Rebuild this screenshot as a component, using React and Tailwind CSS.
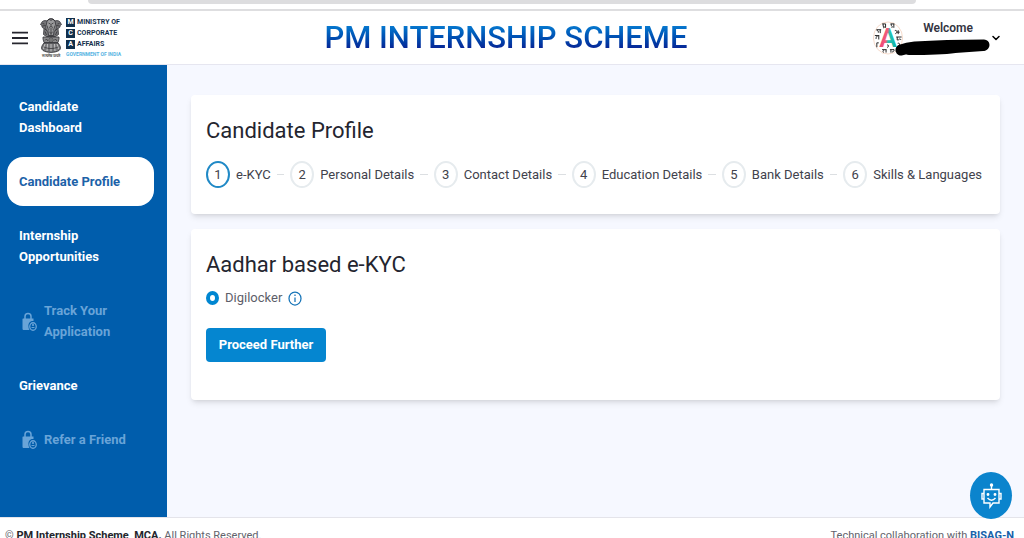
import React, { useState } from "react";
import { FiChevronDown, FiMenu } from "react-icons/fi";

const menus = [
  { label: "Candidate Dashboard" },
  { label: "Candidate Profile" },
  { label: "Internship Opportunities" },
  { label: "Track Your Application", locked: true },
  { label: "Grievance" },
  { label: "Refer a Friend", locked: true },
];

const steps = [
  "e-KYC",
  "Personal Details",
  "Contact Details",
  "Education Details",
  "Bank Details",
  "Skills & Languages",
];

const Emblem = () => (
  <svg viewBox="0 0 44 72" className="h-9 w-[22px]" aria-hidden="true">
    {/* lions */}
    <g fill="#77777a" stroke="#2f2f33" strokeWidth="1.6">
      <path d="M14 8c-5-2-10 0-11 4l-2 3 3 2c-1 4 2 5 4 6l-1 12 6 4h18l6-4-1-12c2-1 5-2 4-6l3-2-2-3c-1-4-6-6-11-4-4-6-12-6-16 0z" />
      <path d="M13 14c0-14 18-14 18 0 3 6 1 13-3 15l-1 8H17l-1-8c-4-2-6-9-3-15z" fill="#9a9a9c" />
    </g>
    <g fill="none" stroke="#29292d" strokeWidth="1.4">
      <path d="M17 12l4 2M27 12l-4 2M22 14v5M18 21l4-2 4 2M19 24h6M14 17l3 10M30 17l-3 10M18 29l4 4 4-4M22 26v10" />
      <path d="M5 13l4 1M39 13l-4 1M5 18l6-1M39 18l-6-1M9 23l4 4M35 23l-4 4M10 29l3 7M34 29l-3 7M15 7l3-3 4 3 4-3 3 3" />
    </g>
    {/* abacus and bell */}
    <path d="M6 40h32v4l-2 7H8l-2-7z" fill="#8a8a8c" stroke="#2f2f33" strokeWidth="1.6" />
    <circle cx="22" cy="46" r="4" fill="#ddd" stroke="#2a2a2d" strokeWidth="1.4" />
    <path d="M19 46h6M22 43v6M10 47l3-3 3 4M28 47l3-3 3 4" fill="none" stroke="#222" strokeWidth="1.3" />
    <path d="M8 52h28c5 6 7 11 2 15-8 5-24 5-32 0-5-4-3-9 2-15z" fill="#77777a" stroke="#2b2b2e" strokeWidth="1.6" />
    <path d="M10 54l-3 10M15 54l-1 14M22 54v15M29 54l1 14M34 54l3 10" stroke="#d5d5d5" strokeWidth="1.6" />
    <path d="M8 60c8 4 20 4 28 0" fill="none" stroke="#2b2b2e" strokeWidth="1.4" />
  </svg>
);

const Avatar = () => (
  <svg viewBox="0 0 64 70" className="h-[34px] w-8 shrink-0" aria-hidden="true">
    <defs>
      <linearGradient id="letter" x1="0" x2="1" y1="0" y2="0.3">
        <stop offset="0.2" stopColor="#ef3f78" />
        <stop offset="0.5" stopColor="#f0607c" />
        <stop offset="0.62" stopColor="#25c4b4" />
        <stop offset="1" stopColor="#12b5a8" />
      </linearGradient>
    </defs>
    <ellipse cx="32" cy="35" rx="30" ry="33" fill="#fff" stroke="#f2cdb8" strokeWidth="1.5" />
    <text x="32" y="54" textAnchor="middle" fontSize="54" fontWeight="600" fill="url(#letter)">
      A
    </text>
    <g fill="none" stroke="#222" strokeWidth="2">
      <path d="M20 6h7M22 6v5c4 0 4 3 0 3M27 6v8" />
      <path d="M37 6h8M39 6c-3 4 4 4 1 8M44 6v8" />
      <path d="M8 18h10M10 18c-2 4 5 2 2 6M16 18v7" />
      <path d="M46 20c5-3 6 6 1 6M53 19v8M50 23h6" />
      <path d="M5 30h9M7 30c6 3-2 3 1 7M13 30v8" />
      <path d="M49 33h11M51 33v6c5 1 4-5 8 0" />
      <path d="M9 45v9M9 45h4" />
      <path d="M52 46c5-2 5 5 1 6h5" />
      <path d="M20 59h9M21 59c5 3-2 3 2 6M28 59v6" />
      <path d="M36 59h9M38 59v6M43 59c4 2 0 4-3 5" />
      <path d="M30 50c4-3 4 5 0 4" />
    </g>
  </svg>
);

const LockIcon = () => (
  <svg viewBox="0 0 30 38" className="h-[19px] w-[15px] shrink-0" aria-hidden="true">
    <path d="M6 14V9c0-8 12-8 12 0v5" fill="none" stroke="currentColor" strokeWidth="3" />
    <path d="M2 13h21v5c-7-1-11 5-10 11 0 3 1 5 2 7H4c-2 0-3-1-3-3V14z" fill="currentColor" />
    <ellipse cx="22" cy="29" rx="6.500" ry="7.500" fill="none" stroke="currentColor" strokeWidth="2.6" />
    <circle cx="22" cy="26" r="2.200" fill="currentColor" />
    <path d="M18 32c1-3 7-3 8 0z" fill="currentColor" />
  </svg>
);

const Header = ({ onMenu }) => (
  <header className="grid h-[56px] shrink-0 grid-cols-[1fr_auto_1fr] items-center border-t-2 border-b border-t-[#dedee0] border-b-[#e6e6f0] bg-white pr-6 pl-3">
    <div className="flex items-center gap-3">
      <button type="button" aria-label="Menu" onClick={onMenu} className="text-[#26262e]">
        <FiMenu className="size-4" viewBox="3 4 18 16" strokeWidth="2" />
      </button>
      <a href="#home" className="flex items-center gap-1">
        <span className="flex w-[22px] flex-col items-center">
          <Emblem />
          <span className="text-[4px] leading-[5px] font-bold whitespace-nowrap text-[#444]">सत्यमेव जयते</span>
        </span>
        <span className="flex flex-col gap-[2px] text-[7px] leading-[9px] font-bold text-[#17324d]">
          {["MINISTRY OF", "CORPORATE", "AFFAIRS"].map((word, index) => (
            <span key={word} className="flex items-center gap-[2px]">
              <span className="w-[9px] bg-[#12304c] text-center text-white">{"MCA"[index]}</span>
              {word}
            </span>
          ))}
          <span className="text-[5px] leading-[6px] text-[#56b4e2]">GOVERNMENT OF INDIA</span>
        </span>
      </a>
    </div>
    <h1 className="bg-linear-to-b from-[#0878cf] from-20% to-[#0a1c92] to-80% bg-clip-text text-[31px] leading-[40px] font-medium text-transparent">
      PM INTERNSHIP SCHEME
    </h1>
    <button type="button" className="relative flex items-center gap-[19px] justify-self-end">
      <Avatar />
      <span className="flex items-center gap-[19px]">
        <span className="pb-5 text-[12px] leading-[16px] font-semibold text-[#33343f]">Welcome</span>
        <FiChevronDown className="size-2" viewBox="4 5 16 14" strokeWidth="3" />
      </span>
      <svg viewBox="0 0 96 18" className="absolute top-[19px] left-[23px] h-[18px] w-24" aria-hidden="true">
        <path d="M6 11Q12 9 20 8Q50 6 89 6" fill="none" stroke="#000" strokeWidth="11" strokeLinecap="round" />
        <path d="M14 12Q45 12 60 10L88 8" fill="none" stroke="#000" strokeWidth="8" strokeLinecap="round" />
      </svg>
    </button>
  </header>
);

const Sidebar = ({ active, onSelect }) => (
  <nav className="flex w-[167px] shrink-0 flex-col gap-[5px] bg-[#005dac] pt-[17px] pr-[13px] pl-[7px]">
    {menus.map(({ label, locked }) => (
      <a
        key={label}
        href="#menu"
        onClick={() => !locked && onSelect(label)}
        className={`flex items-center gap-[7px] rounded-2xl py-3.5 text-[13px] leading-[21px] font-bold ${locked ? "pr-7 pl-[15px] text-[#69a4d8]" : "pr-7 pl-3"} ${active == label ? "bg-white text-[#1c62a8]" : locked ? "" : "text-white"}`}
      >
        {locked && <LockIcon />}
        {label}
      </a>
    ))}
  </nav>
);

const Stepper = () => (
  <ol className="flex items-center gap-[6px] text-[13px] leading-[20px] text-[#41424c]">
    {steps.map((step, index) => (
      <React.Fragment key={step}>
        {index > 0 && <li aria-hidden="true" className="h-px flex-1 bg-[#dcdfe2]"></li>}
        <li className="flex items-center gap-[6px] whitespace-nowrap">
          <span
            className={`flex h-[27px] w-6 items-center justify-center rounded-[50%] ${index == 0 ? "border-2 border-[#2089c6]" : "border-2 border-[#e6ebee]"}`}
          >
            {index + 1}
          </span>
          {step}
        </li>
      </React.Fragment>
    ))}
  </ol>
);

const App = () => {
  const [active, setActive] = useState("Candidate Profile");
  const [open, setOpen] = useState(true);

  return (
    <div className="relative flex h-screen flex-col overflow-hidden bg-white font-['Roboto',sans-serif]">
      <div className="mr-[108px] ml-[88px] h-1 shrink-0 rounded-b-md bg-[#dddddf]"></div>
      <div className="h-[5px] shrink-0"></div>
      <Header onMenu={() => setOpen(!open)} />
      <div className="flex min-h-0 flex-1">
        {open && <Sidebar active={active} onSelect={setActive} />}
        <main className="flex flex-1 flex-col gap-[15px] bg-[#f6f8ff] px-6 pt-[30px]">
          <section className="rounded bg-white pt-5 pr-[18px] pb-[26px] pl-[15px] shadow-md">
            <h2 className="mb-[14px] text-[22px] leading-[32px] text-[#24252f]">Candidate Profile</h2>
            <Stepper />
          </section>
          <section className="rounded bg-white pt-5 pb-[38px] pl-[15px] shadow-md">
            <h2 className="text-[22px] leading-[32px] text-[#24252f]">Aadhar based e-KYC</h2>
            <div className="mt-[7px] flex items-center gap-[6px] text-[13px] leading-[20px] text-[#5d5e69]">
              <input
                type="radio"
                id="digilocker"
                name="kyc"
                defaultChecked
                className="h-[14px] w-[13px] appearance-none rounded-[50%] border border-[#0086d1] checked:border-4"
              />
              <label htmlFor="digilocker">Digilocker</label>
              <svg viewBox="0 0 28 30" className="h-[15px] w-[14px]" aria-label="Info">
                <ellipse cx="14" cy="15" rx="12" ry="13" fill="none" stroke="#1674b8" strokeWidth="2.5" />
                <path d="M14 13v9M14 7v3" stroke="#1674b8" strokeWidth="2.5" />
              </svg>
            </div>
            <button
              type="button"
              className="mt-5 h-[34px] w-[120px] rounded bg-[#0586d0] text-[13px] font-bold whitespace-nowrap text-white"
            >
              Proceed Further
            </button>
          </section>
        </main>
      </div>
      <footer className="flex h-[21px] shrink-0 justify-between overflow-hidden border-t border-[#e4e4ea] bg-white pt-[9px] pr-[10px] pl-[5px] text-[11px] leading-[18px] text-[#62636c]">
        <p>
          © <b className="text-[#24252c]">PM Internship Scheme, MCA.</b> All Rights Reserved.
        </p>
        <p>
          Technical collaboration with{" "}
          <a href="#bisag" className="font-bold text-[#1762aa]">
            BISAG-N
          </a>
        </p>
      </footer>
      <button
        type="button"
        aria-label="Chat"
        className="absolute right-3 bottom-[19px] flex h-[47px] w-[42px] items-center justify-center rounded-[50%] bg-[#0b84cd]"
      >
        <svg viewBox="0 0 42 52" className="h-[26px] w-[21px]" fill="none" stroke="#fff" strokeWidth="2.8">
          <path d="M6 13h30v27H24l-6 8v-8H6zM21 13V4" />
          <path d="M6 21H2v11h4M36 21h4v11h-4" />
          <path d="M13 30q8 9 16 0" />
          <circle cx="21" cy="4" r="2" fill="#fff" />
          <circle cx="14" cy="23" r="1.500" fill="#fff" />
          <circle cx="28" cy="23" r="1.500" fill="#fff" />
        </svg>
      </button>
    </div>
  );
};

export default App;
